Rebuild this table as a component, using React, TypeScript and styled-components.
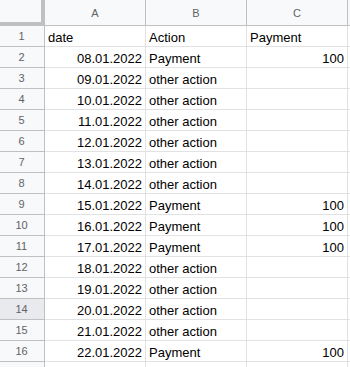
import React, { FC } from 'react';
import styled, { createGlobalStyle } from 'styled-components';

const GlobalStyle = createGlobalStyle`
  body {
    margin: 0;
    background: #fff;
    font-family: 'Liberation Sans', Arial, sans-serif;
  }
`;

const Sheet = styled.div`
  display: grid;
  grid-template-columns: 45px 101px 101px 101px 40px;
  grid-auto-rows: 21px;
  grid-template-rows: 26px;
  width: 350px;
  overflow: hidden;
`;

const Corner = styled.div`
  background: #f8f9fa;
  border-right: 4px solid #c0c0c0;
  border-bottom: 4px solid #c0c0c0;
  box-sizing: border-box;
`;

const ColHead = styled.div`
  background: #f8f9fa;
  border-right: 1px solid #c0c0c0;
  border-bottom: 1px solid #c0c0c0;
  box-sizing: border-box;
  display: flex;
  align-items: center;
  justify-content: center;
  font-size: 11px;
  color: #5f6368;
  padding-top: 1px;
`;

const RowHead = styled.div<{ active?: boolean }>`
  background: ${(p) => (p.active ? '#e8eaed' : '#f8f9fa')};
  border-right: 1px solid #c0c0c0;
  border-bottom: 1px solid #c0c0c0;
  box-sizing: border-box;
  display: flex;
  align-items: center;
  justify-content: center;
  font-size: 11px;
  color: #5f6368;
  padding-right: 1px;
`;

const Cell = styled.div<{ right?: boolean }>`
  border-right: 1px solid #e2e2e3;
  border-bottom: 1px solid #e2e2e3;
  box-sizing: border-box;
  display: flex;
  align-items: flex-end;
  justify-content: ${(p) => (p.right ? 'flex-end' : 'flex-start')};
  padding: 0 3px 1px 3px;
  font-size: 13px;
  color: #000;
  white-space: nowrap;
  overflow: hidden;
`;

const rows: [string, string, string][] = [
  ['08.01.2022', 'Payment', '100'],
  ['09.01.2022', 'other action', ''],
  ['10.01.2022', 'other action', ''],
  ['11.01.2022', 'other action', ''],
  ['12.01.2022', 'other action', ''],
  ['13.01.2022', 'other action', ''],
  ['14.01.2022', 'other action', ''],
  ['15.01.2022', 'Payment', '100'],
  ['16.01.2022', 'Payment', '100'],
  ['17.01.2022', 'Payment', '100'],
  ['18.01.2022', 'other action', ''],
  ['19.01.2022', 'other action', ''],
  ['20.01.2022', 'other action', ''],
  ['21.01.2022', 'other action', ''],
  ['22.01.2022', 'Payment', '100'],
];

const App: FC = () => (
  <>
    <GlobalStyle />
    <Sheet>
      <Corner />
      <ColHead>A</ColHead>
      <ColHead>B</ColHead>
      <ColHead>C</ColHead>
      <ColHead />

      <RowHead>1</RowHead>
      <Cell>date</Cell>
      <Cell>Action</Cell>
      <Cell>Payment</Cell>
      <Cell />

      {rows.map(([date, action, pay], i) => (
        <React.Fragment key={date}>
          <RowHead active={i + 2 === 14}>{i + 2}</RowHead>
          <Cell right>{date}</Cell>
          <Cell>{action}</Cell>
          <Cell right>{pay}</Cell>
          <Cell />
        </React.Fragment>
      ))}

      <RowHead />
      <Cell />
      <Cell />
      <Cell />
      <Cell />
    </Sheet>
  </>
);

export default App;
